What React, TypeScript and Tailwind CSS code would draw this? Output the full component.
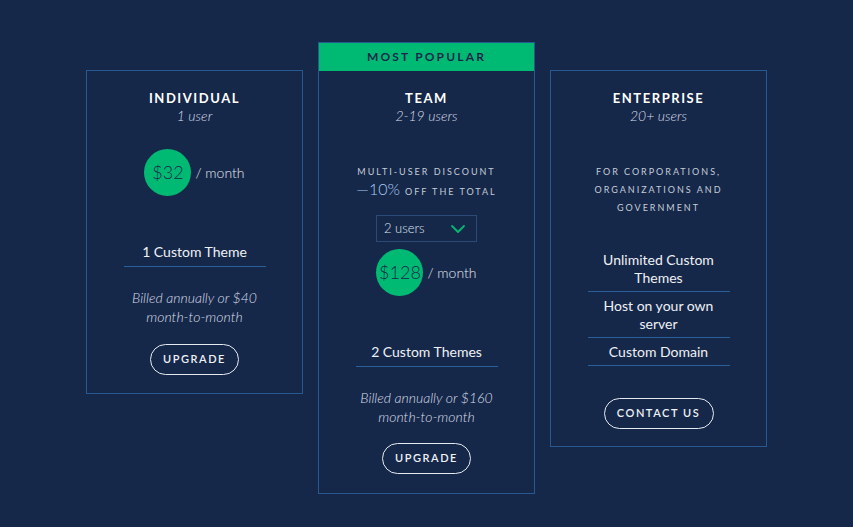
import { ChevronDown } from "lucide-react";

const font = { fontFamily: "Lato, 'Open Sans', sans-serif" };

function Price({ amount }: { amount: string }) {
    return (
        <div className="flex items-center">
            <div className="w-[47px] h-[47px] rounded-full bg-[#00ba74] flex items-center justify-center text-[18px] font-light text-[#16284a]">
                {amount}
            </div>
            <span className="ml-[4px] text-[14px] font-light text-[#e3e8f0]">/ month</span>
        </div>
    );
}

function Feature({ children }: { children: React.ReactNode }) {
    return (
        <div className="w-[142px] text-center text-[14px] leading-[20px] text-[#eef1f5] pb-[4px] border-b border-[#2b5f99]">
            {children}
        </div>
    );
}

function Billed({ amount }: { amount: string }) {
    return (
        <p className="text-center text-[14px] leading-[19px] font-light italic text-[#d6dde8]">
            Billed annually or {amount}
            <br />
            month-to-month
        </p>
    );
}

function Button({ label, wide }: { label: string; wide?: boolean }) {
    return (
        <button
            className={`${wide ? "w-[110px]" : "w-[89px]"} h-[31px] rounded-full border-[1.5px] border-[#e6eaf0] text-[11px] font-semibold tracking-[0.14em] text-[#eef1f5]`}
        >
            {label}
        </button>
    );
}

function Heading({ title, sub }: { title: string; sub: string }) {
    return (
        <>
            <h3 className="text-[13px] leading-[18px] font-bold tracking-[0.12em] text-white">{title}</h3>
            <p className="text-[14px] leading-[18px] font-light italic text-[#d6dde8]">{sub}</p>
        </>
    );
}

export default function App() {
    return (
        <div className="w-full min-h-[527px] bg-[#16284a]" style={font}>
            <div className="flex justify-center items-start gap-[15px] pt-[42px]">
                {/* individual */}
                <div className="mt-[28px] w-[217px] border border-[#285890] flex flex-col items-center pt-[18px] pb-[18px]">
                    <Heading title="INDIVIDUAL" sub="1 user" />
                    <div className="mt-[24px]">
                        <Price amount="$32" />
                    </div>
                    <div className="mt-[46px]">
                        <Feature>1 Custom Theme</Feature>
                    </div>
                    <div className="mt-[21px]">
                        <Billed amount="$40" />
                    </div>
                    <div className="mt-[18px]">
                        <Button label="UPGRADE" />
                    </div>
                </div>

                {/* team */}
                <div className="w-[217px] border border-[#285890] flex flex-col items-center pb-[19px]">
                    <div className="w-full h-[28px] bg-[#00ba74] flex items-center justify-center text-[12px] font-bold tracking-[0.18em] text-[#16284a]">
                        MOST POPULAR
                    </div>
                    <div className="pt-[18px] flex flex-col items-center">
                        <Heading title="TEAM" sub="2-19 users" />
                    </div>
                    <div className="mt-[39px] flex flex-col items-center text-[#c3ccd8]">
                        <span className="text-[9px] leading-[16px] tracking-[0.22em]">MULTI-USER DISCOUNT</span>
                        <span className="leading-[18px] flex items-baseline">
                            <span className="text-[16px] font-light text-[#a9cbf2]">—10%</span>
                            <span className="ml-[5px] text-[9px] tracking-[0.22em]">OFF THE TOTAL</span>
                        </span>
                    </div>
                    <div className="mt-[14px] w-[101px] h-[27px] border border-[#2b4a78] flex items-center justify-between pl-[7px] pr-[6px]">
                        <span className="text-[13px] font-light text-[#dfe5ee]">2 users</span>
                        <ChevronDown className="w-[24px] h-[24px] text-[#00ba74]" strokeWidth={1.8} />
                    </div>
                    <div className="mt-[7px]">
                        <Price amount="$128" />
                    </div>
                    <div className="mt-[46px]">
                        <Feature>2 Custom Themes</Feature>
                    </div>
                    <div className="mt-[21px]">
                        <Billed amount="$160" />
                    </div>
                    <div className="mt-[17px]">
                        <Button label="UPGRADE" />
                    </div>
                </div>

                {/* enterprise */}
                <div className="mt-[28px] w-[217px] border border-[#285890] flex flex-col items-center pt-[18px] pb-[17px]">
                    <Heading title="ENTERPRISE" sub="20+ users" />
                    <p className="mt-[38px] text-center text-[9px] leading-[18px] tracking-[0.22em] text-[#c3ccd8]">
                        FOR CORPORATIONS,
                        <br />
                        ORGANIZATIONS AND
                        <br />
                        GOVERNMENT
                    </p>
                    <div className="mt-[29px] flex flex-col">
                        {["Unlimited Custom Themes", "Host on your own server", "Custom Domain"].map((f) => (
                            <div
                                key={f}
                                className="w-[142px] text-center text-[14px] leading-[18px] text-[#eef1f5] pt-[5px] pb-[4px] border-b border-[#2b5f99]"
                            >
                                {f === "Unlimited Custom Themes" ? (
                                    <>
                                        Unlimited Custom
                                        <br />
                                        Themes
                                    </>
                                ) : f === "Host on your own server" ? (
                                    <>
                                        Host on your own
                                        <br />
                                        server
                                    </>
                                ) : (
                                    f
                                )}
                            </div>
                        ))}
                    </div>
                    <div className="mt-[32px]">
                        <Button label="CONTACT US" wide />
                    </div>
                </div>
            </div>
        </div>
    );
}
